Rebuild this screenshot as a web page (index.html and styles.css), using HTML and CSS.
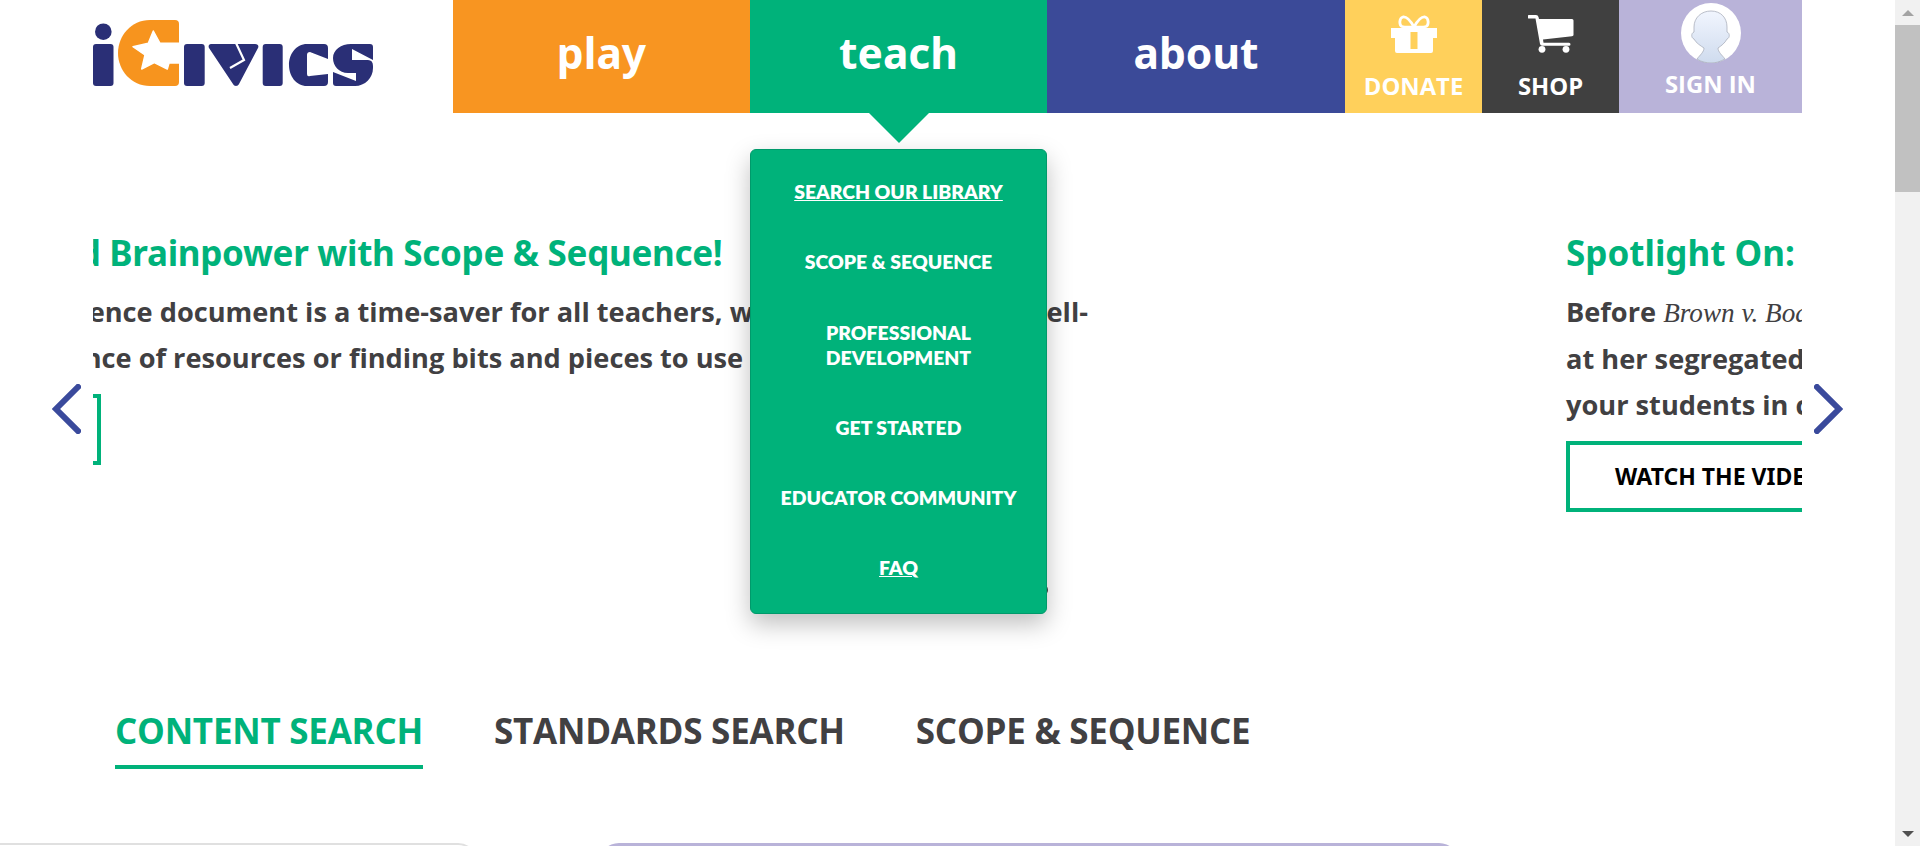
FILE: index.html
```html
<!DOCTYPE html>
<html lang="en">
<head>
    <meta charset="UTF-8">
    <meta name="viewport" content="width=device-width, initial-scale=1.0">
    <title>iCivics: Teach</title>
    <link rel="stylesheet" href="styles.css">
</head>
<body>

<div class="page">
    <div class="wrap">
        <header class="top">
            <a class="logo" href="#" aria-label="iCivics">
                <svg width="282" height="70" viewBox="0 0 282 70">
                    <circle cx="10.3" cy="15.7" r="8.3" fill="#2a2f76"/>
                    <rect x="0" y="28" width="20.5" height="42" rx="3" fill="#2a2f76"/>
                    <path fill="#f7941e" d="M57 4H82a4 4 0 0 1 4 4V66a4 4 0 0 1-4 4H57C38 70 25 54 25 37S38 4 57 4Z"/>
                    <path fill="#fff" stroke="#fff" stroke-width="1.5" stroke-linejoin="round" d="M60.3 15L67 27.3H88V47H76L74.3 53 61.3 46.7 48.7 53 52 39 40 30.7 55.3 27.3Z"/>
                    <rect x="91" y="28" width="20.7" height="42" rx="3" fill="#2a2f76"/>
                    <path fill="#2a2f76" d="M118 28H162c3 0 4 2 3 4L146 68c-1 2.500-5 2.500-6 0L116 32c-1-2 0-4 2-4Z"/>
                    <path fill="none" stroke="#fff" stroke-width="2.200" d="M143 27L151 44 137 52"/>
                    <rect x="169.700" y="28" width="20" height="42" rx="3" fill="#2a2f76"/>
                    <path fill="#2a2f76" d="M214 28H231a4 4 0 0 1 4 4V43L217 36Q214 36 214 39V58Q214 61 217 60L235 58V66a4 4 0 0 1-4 4H214C203 70 196 60 196 49S203 28 214 28Z"/>
                    <path fill="#2a2f76" d="M258 28H277a3 3 0 0 1 3 3V44L259 33 259 44H275Q280 44 280 50V52C280 62 272 70 262 70H243a3 3 0 0 1-3-3V56L263 65V57H255C246 57 240 50 240 42S248 28 258 28Z"/>
                </svg>
            </a>
            <nav class="nav">
                <a class="nav-main nav-play" href="#">play</a>
                <a class="nav-main nav-teach" href="#">teach</a>
                <a class="nav-main nav-about" href="#">about</a>
                <a class="nav-small nav-donate" href="#">
                    <svg width="46" height="40" viewBox="0 0 46 40">
                        <path fill="#fff" fill-rule="evenodd" d="M0 13H46V23H42V36a2 2 0 0 1-2 2H6a2 2 0 0 1-2-2V23H0ZM19.500 17V34H26.500V17Z"/>
                        <path fill="none" stroke="#fff" stroke-width="2.800" d="M23 12C19 5 15 1.500 12 2 8 3 8 10 11 11.500 14 12.500 19 12 23 12ZM23 12C27 5 31 1.500 34 2 38 3 38 10 35 11.500 32 12.500 27 12 23 12Z"/>
                    </svg>
                    <span>DONATE</span>
                </a>
                <a class="nav-small nav-shop" href="#">
                    <svg width="46" height="40" viewBox="0 0 46 40">
                        <path fill="#fff" d="M1 0H8Q10 0 10.500 2L11 4H44Q45.500 4 45.500 5.500V20Q45.500 21 44 21.200L15 24.500 15.500 27.700H41a1.500 1.500 0 0 1 0 3H14Q12.500 30.700 12 29L7.500 3.500H1a1.700 1.700 0 0 1 0-3.500Z"/>
                        <circle cx="14" cy="34.300" r="3.400" fill="#fff"/>
                        <circle cx="38" cy="34.300" r="3.400" fill="#fff"/>
                    </svg>
                    <span>SHOP</span>
                </a>
                <a class="nav-small nav-signin" href="#">
                    <svg class="avatar" width="60" height="60" viewBox="0 0 60 60">
                        <defs>
                            <linearGradient id="face" x1="0" y1="0" x2="0" y2="1">
                                <stop offset="0" stop-color="#f1f5fe"/>
                                <stop offset="1" stop-color="#cfdbee"/>
                            </linearGradient>
                        </defs>
                        <circle cx="30" cy="30" r="30" fill="#fff"/>
                        <path fill="url(#face)" stroke="#a9aebb" stroke-width=".8" d="M30 8C40 8 46 15 46 24V29C49 30 49 35 46 36 44 40 40 43 37 45 37 49 41 52 44 56 39 59 34 60 30 60 26 60 20 59 16 56 19 52 23 49 23 45 20 43 15 40 13 36 10 35 10 30 13 29V24C13 15 20 8 30 8Z"/>
                    </svg>
                    <span>SIGN IN</span>
                </a>
            </nav>
        </header>

        <section class="carousel">
            <div class="track">
                <article class="slide slide-one">
                    <h2>Build Brainpower with Scope &amp; Sequence!</h2>
                    <p>
                        <span class="line">Our scope &amp; sequence document is a time-saver for all teachers, whether you desire a well-</span>
                        <span class="line line-two">planned sequence of resources or finding bits and pieces to use in class.</span>
                    </p>
                    <a class="btn" href="#">VIEW IT NOW</a>
                </article>
                <article class="slide slide-two">
                    <h2>Spotlight On:</h2>
                    <p>
                        <span class="line">Before <em>Brown v. Board of Education</em>, Linda Brown</span>
                        <span class="line">at her segregated school every day. Engage</span>
                        <span class="line">your students in civil rights history.</span>
                    </p>
                    <a class="btn" href="#">WATCH THE VIDEO</a>
                </article>
            </div>
            <span class="dot"></span>
        </section>

        <div class="tabs">
            <a class="tab active" href="#">CONTENT SEARCH</a>
            <a class="tab" href="#">STANDARDS SEARCH</a>
            <a class="tab" href="#">SCOPE &amp; SEQUENCE</a>
        </div>

        <div class="cards">
            <div class="card-grey"></div>
            <div class="card-purple"></div>
        </div>

        <div class="dropdown">
            <a class="current" href="#">SEARCH OUR LIBRARY</a>
            <a href="#">SCOPE &amp; SEQUENCE</a>
            <a href="#">PROFESSIONAL<br>DEVELOPMENT</a>
            <a href="#">GET STARTED</a>
            <a href="#">EDUCATOR COMMUNITY</a>
            <a class="current" href="#">FAQ</a>
        </div>

        <svg class="arrow arrow-left" width="29" height="50" viewBox="0 0 29 50"><path d="M26 3L4 25l22 22" fill="none" stroke="#3a4a9c" stroke-width="6" stroke-linecap="square"/></svg>
        <svg class="arrow arrow-right" width="29" height="50" viewBox="0 0 29 50"><path d="M3 3l22 22L3 47" fill="none" stroke="#3a4a9c" stroke-width="6" stroke-linecap="square"/></svg>
    </div>

    <div class="scrollbar">
        <div class="scroll-up"></div>
        <div class="scroll-thumb"></div>
        <div class="scroll-down"></div>
    </div>
</div>

</body>
</html>
```
FILE: styles.css
```css
html, body{
    margin: 0;
    height: 100%;
    overflow: hidden;
    background-color: #fff;
}
a{
    text-decoration: none;
    color: inherit;
}
.page{
    display: flex;
    height: 846px;
}
.wrap{
    position: relative;
    flex: 1;
    padding-left: 93px;
    padding-right: 93px;
    overflow: hidden;
}

/* header */
.top{
    display: flex;
    justify-content: space-between;
    height: 113px;
}
.logo{
    display: block;
    padding-top: 16px;
}
.nav{
    display: flex;
    height: 113px;
}
.nav-main{
    width: 297px;
    box-sizing: border-box;
    padding-top: 18px;
    text-align: center;
    color: #fff;
    font-family: "Noto Sans", sans-serif;
    font-weight: 700;
    font-size: 42.5px;
    line-height: 70px;
}
.nav-play{ background-color: #f89521; }
.nav-teach{ background-color: #00b27a; }
.nav-about{
    width: 298px;
    background-color: #3b4a98;
}
.nav-small{
    width: 137px;
    display: flex;
    flex-direction: column;
    align-items: center;
    padding-top: 15px;
    box-sizing: border-box;
    color: #fff;
    font-family: "Open Sans", sans-serif;
    font-weight: 700;
    font-size: 23.8px;
    line-height: 30px;
}
.nav-small span{
    margin-top: 16px;
}
.nav-donate{ background-color: #ffd05b; }
.nav-shop{ background-color: #404040; }
.nav-signin{
    width: 183px;
    background-color: #b9b3d9;
    padding-top: 3px;
}
.nav-signin span{
    margin-top: 6px;
}

/* carousel */
.carousel{
    position: relative;
    height: 593px;
    overflow: hidden;
}
.track{
    display: flex;
    margin-left: -240px;
}
.slide{
    flex: none;
    white-space: nowrap;
}
.slide-one{
    width: 1713px;
}
.slide-two{
    width: 600px;
}
.slide h2{
    margin: 0;
    padding-top: 117px;
    color: #00b27a;
    font-family: "Noto Sans", sans-serif;
    font-weight: 700;
    font-size: 35px;
    line-height: 46px;
}
.slide-one h2{
    padding-left: 160px;
    letter-spacing: -0.3px;
}
.slide p{
    margin: 13px 0 0;
    color: #414042;
    font-family: "Open Sans", sans-serif;
    font-weight: 700;
    font-size: 27.2px;
    line-height: 46px;
}
.slide em{
    font-family: "Liberation Serif", serif;
    font-weight: 400;
}
.line{
    display: block;
}
.line-two{
    margin-left: 32px;
}
.btn{
    display: inline-block;
    box-sizing: border-box;
    height: 71px;
    margin-top: 13px;
    padding: 0 45px;
    border: 4px solid #00b27a;
    color: #000;
    font-family: "Noto Sans", sans-serif;
    font-weight: 700;
    font-size: 23px;
    line-height: 63px;
}
.slide-one .btn{
    width: 248px;
    padding: 0;
    text-align: center;
}
.dot{
    position: absolute;
    left: 943px;
    top: 471px;
    width: 12px;
    height: 12px;
    border-radius: 50%;
    background-color: #414042;
}

/* tabs */
.tabs{
    display: flex;
    gap: 71px;
    margin-left: 22px;
}
.tab{
    padding-bottom: 9px;
    border-bottom: 4px solid transparent;
    color: #414042;
    font-family: "Open Sans", sans-serif;
    font-weight: 700;
    font-size: 35px;
    letter-spacing: -0.25px;
    line-height: 50px;
}
.tab.active{
    color: #00b27a;
    border-bottom-color: #00b27a;
}

/* bottom of the page, cut off by the window */
.cards{
    position: absolute;
    left: 0;
    right: 0;
    top: 843px;
    height: 60px;
}
.card-grey{
    position: absolute;
    left: -40px;
    top: 0;
    width: 518px;
    height: 60px;
    box-sizing: border-box;
    border: 2px solid #e0e0e0;
    border-radius: 20px;
}
.card-purple{
    position: absolute;
    left: 599px;
    top: 0;
    width: 860px;
    height: 60px;
    background-color: #b9b3d9;
    border-radius: 20px;
}

/* teach menu */
.dropdown{
    position: absolute;
    left: 750px;
    top: 149px;
    width: 297px;
    height: 465px;
    box-sizing: border-box;
    padding-top: 29px;
    display: flex;
    flex-direction: column;
    gap: 45.3px;
    background-color: #00b27a;
    border: 1px solid #009a6b;
    border-radius: 6px;
    box-shadow: 0 10px 25px rgba(0, 0, 0, 0.25);
    color: #fff;
    font-family: "Lato", sans-serif;
    font-weight: 800;
    font-size: 19.4px;
    line-height: 25px;
    text-align: center;
}
.dropdown::before{
    content: "";
    position: absolute;
    left: 118px;
    top: -37px;
    border-left: 30px solid transparent;
    border-right: 30px solid transparent;
    border-top: 30px solid #00b27a;
}
.dropdown .current{
    text-decoration: underline;
}

/* carousel arrows */
.arrow{
    position: absolute;
    top: 384px;
}
.arrow-left{ left: 52px; }
.arrow-right{ left: 1814px; }

/* window scrollbar */
.scrollbar{
    width: 25px;
    display: flex;
    flex-direction: column;
    background-color: #f1f1f1;
}
.scroll-up, .scroll-down{
    height: 25px;
    display: flex;
    align-items: center;
    justify-content: center;
}
.scroll-up::before{
    content: "";
    border-left: 6px solid transparent;
    border-right: 6px solid transparent;
    border-bottom: 6px solid #a3a3a3;
}
.scroll-down{
    margin-top: auto;
}
.scroll-down::before{
    content: "";
    border-left: 6px solid transparent;
    border-right: 6px solid transparent;
    border-top: 6px solid #505050;
}
.scroll-thumb{
    height: 167px;
    background-color: #c1c1c1;
}
```
